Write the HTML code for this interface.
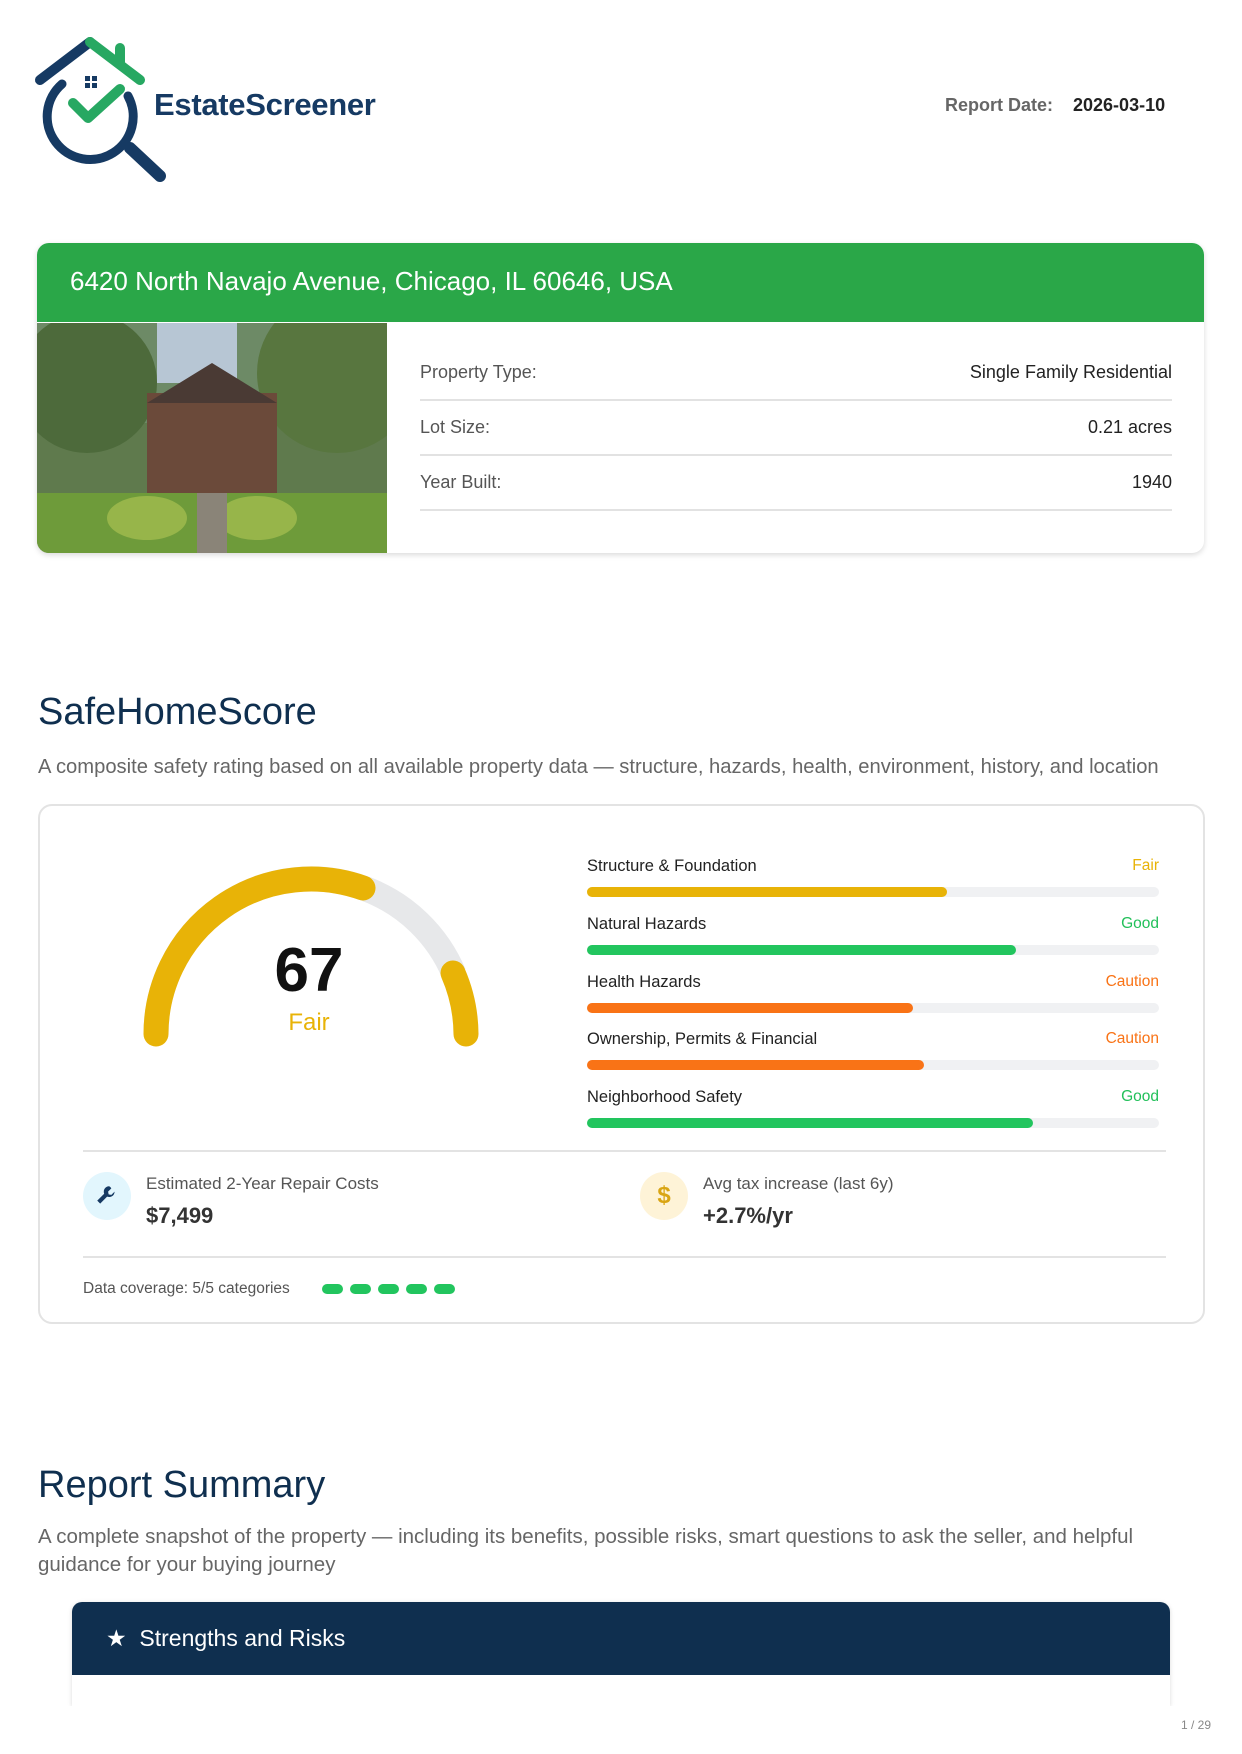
<!DOCTYPE html>
<html><head><meta charset="utf-8"><style>
*{margin:0;padding:0;box-sizing:border-box}
body{width:1242px;height:1754px;background:#fff;font-family:"Liberation Sans",sans-serif;position:relative;overflow:hidden;color:#222}
.a{position:absolute}
.row{position:absolute;left:420px;width:752px;height:55px;border-bottom:2px solid #e2e2e2;font-size:18px;color:#555;display:flex;justify-content:space-between;align-items:center}
.row b{font-weight:normal;color:#222}
.lbl{position:absolute;left:587px;width:572px;font-size:16.5px;color:#222;display:flex;justify-content:space-between}
.bar{position:absolute;left:587px;width:572px;height:10px;border-radius:5px;background:#f0f1f3}
.bar i{display:block;height:10px;border-radius:5px}
</style></head><body>
<svg class="a" style="left:0;top:0" width="200" height="190">
<path d="M40 80 L90 42" stroke="#163a63" stroke-width="10" stroke-linecap="round" fill="none"/>
<path d="M90 42 L140 80 M120 62 V48" stroke="#27a862" stroke-width="10" stroke-linecap="round" fill="none"/>
<path d="M62 84 A43 43 0 1 0 128 96" stroke="#163a63" stroke-width="9" stroke-linecap="round" fill="none"/>
<path d="M130 148 L160 176" stroke="#163a63" stroke-width="12" stroke-linecap="round"/>
<rect x="85" y="76" width="5" height="5" fill="#163a63"/><rect x="92" y="76" width="5" height="5" fill="#163a63"/>
<rect x="85" y="83" width="5" height="5" fill="#163a63"/><rect x="92" y="83" width="5" height="5" fill="#163a63"/>
<path d="M73 103 L88 118 L120 89" stroke="#27a862" stroke-width="10" stroke-linecap="round" stroke-linejoin="round" fill="none"/>
</svg>
<div class="a" style="left:154px;top:87px;font-size:31px;font-weight:bold;color:#163a63;letter-spacing:-0.3px">EstateScreener</div>
<div class="a" style="left:945px;top:95px;font-size:18px;font-weight:bold;color:#666">Report Date:<span style="color:#222;margin-left:20px">2026-03-10</span></div>

<div class="a" style="left:37px;top:243px;border-radius:12px;box-shadow:0 2px 6px rgba(0,0,0,.15);overflow:hidden;background:#fff;width:1167px;height:310px">
<div style="height:79px;background:#2aa748;color:#fff;font-size:26px;padding:23px 0 0 33px">6420 North Navajo Avenue, Chicago, IL 60646, USA</div>
<svg width="350" height="234" style="position:absolute;left:0;top:80px">
<rect width="350" height="234" fill="#5f7a4d"/><rect width="350" height="100" fill="#6d8a66"/>
<rect x="120" y="0" width="80" height="60" fill="#b7c6d4"/>
<circle cx="50" cy="60" r="70" fill="#4d6a3b"/><circle cx="300" cy="50" r="80" fill="#58763f"/>
<rect x="110" y="70" width="130" height="100" fill="#6b4a3a"/><polygon points="110,80 175,40 240,80" fill="#4a3a34"/>
<rect x="0" y="170" width="350" height="64" fill="#6e9b3a"/><ellipse cx="110" cy="195" rx="40" ry="22" fill="#97b54a"/><ellipse cx="220" cy="195" rx="40" ry="22" fill="#97b54a"/>
<rect x="160" y="170" width="30" height="64" fill="#8a8478"/>
</svg>
<div class="row" style="top:103px;left:383px">Property Type:<b>Single Family Residential</b></div>
<div class="row" style="top:158px;left:383px">Lot Size:<b>0.21 acres</b></div>
<div class="row" style="top:213px;left:383px">Year Built:<b>1940</b></div>
</div>

<div class="a" style="left:38px;top:691px;font-size:38px;color:#0f2f4f">SafeHomeScore</div>
<div class="a" style="left:38px;top:756px;font-size:20.2px;color:#666;white-space:nowrap">A composite safety rating based on all available property data — structure, hazards, health, environment, history, and location</div>

<div class="a" style="left:38px;top:804px;height:520px;border:2px solid #e3e3e3;border-radius:14px;width:1167px"></div>
<svg class="a" style="left:0;top:-7px" width="700" height="1100">
<path d="M156 1041 A155 155 0 0 1 366 896" stroke="#e7e8ea" stroke-width="25" fill="none"/>
<path d="M366 896 A155 155 0 0 1 454 981" stroke="#e7e8ea" stroke-width="25" fill="none"/>
<path d="M156 1041 A155 155 0 0 1 363 895" stroke="#e8b307" stroke-width="25" stroke-linecap="round" fill="none"/>
<path d="M453 980 A155 155 0 0 1 466 1041" stroke="#e8b307" stroke-width="25" stroke-linecap="round" fill="none"/>
</svg>
<div class="a" style="left:209px;top:940px;width:200px;text-align:center;font-size:62px;font-weight:bold;color:#111;line-height:1">67</div>
<div class="a" style="left:209px;top:1009px;width:200px;text-align:center;font-size:24px;color:#e8b307">Fair</div>

<div class="lbl" style="top:857px">Structure &amp; Foundation<span style="color:#e8b307;font-size:15.5px">Fair</span></div>
<div class="bar" style="top:887px"><i style="width:63%;background:#e8b307"></i></div>
<div class="lbl" style="top:915px">Natural Hazards<span style="color:#22c05a;font-size:15.5px">Good</span></div>
<div class="bar" style="top:945px"><i style="width:75%;background:#22c55e"></i></div>
<div class="lbl" style="top:973px">Health Hazards<span style="color:#f97316;font-size:15.5px">Caution</span></div>
<div class="bar" style="top:1003px"><i style="width:57%;background:#f97316"></i></div>
<div class="lbl" style="top:1030px">Ownership, Permits &amp; Financial<span style="color:#f97316;font-size:15.5px">Caution</span></div>
<div class="bar" style="top:1060px"><i style="width:59%;background:#f97316"></i></div>
<div class="lbl" style="top:1088px">Neighborhood Safety<span style="color:#22c05a;font-size:15.5px">Good</span></div>
<div class="bar" style="top:1118px"><i style="width:78%;background:#22c55e"></i></div>

<div class="a" style="left:83px;top:1150px;width:1083px;height:2px;background:#e3e3e3"></div>
<div class="a" style="left:83px;top:1172px;width:48px;height:48px;border-radius:50%;background:#e2f6fd;text-align:center">
<svg width="26" height="26" viewBox="0 0 24 24" style="margin-top:11px"><path d="M14 3a5 5 0 0 0-4.6 6.9L3 16.3 5.7 19l6.4-6.4A5 5 0 0 0 19 8l-3 3-2.5-.5L13 8l3-3a5 5 0 0 0-2-2z" fill="#163a63"/></svg></div>
<div class="a" style="left:146px;top:1174px;font-size:17px;color:#555">Estimated 2-Year Repair Costs</div>
<div class="a" style="left:146px;top:1203px;font-size:22px;font-weight:bold;color:#333">$7,499</div>
<div class="a" style="left:640px;top:1172px;width:48px;height:48px;border-radius:50%;background:#fef3d7;color:#d9a514;font-size:24px;font-weight:bold;text-align:center;line-height:48px">$</div>
<div class="a" style="left:703px;top:1174px;font-size:17px;color:#555">Avg tax increase (last 6y)</div>
<div class="a" style="left:703px;top:1203px;font-size:22px;font-weight:bold;color:#333">+2.7%/yr</div>
<div class="a" style="left:83px;top:1256px;width:1083px;height:2px;background:#e3e3e3"></div>
<div class="a" style="left:83px;top:1280px;font-size:15.5px;color:#555">Data coverage: 5/5 categories</div>
<div class="a" style="left:322px;top:1284px;display:flex;gap:7px"><i style="width:21px;height:10px;border-radius:5px;background:#22c55e"></i><i style="width:21px;height:10px;border-radius:5px;background:#22c55e"></i><i style="width:21px;height:10px;border-radius:5px;background:#22c55e"></i><i style="width:21px;height:10px;border-radius:5px;background:#22c55e"></i><i style="width:21px;height:10px;border-radius:5px;background:#22c55e"></i></div>

<div class="a" style="left:38px;top:1464px;font-size:38px;color:#0f2f4f">Report Summary</div>
<div class="a" style="left:38px;top:1523px;width:1130px;font-size:20.5px;color:#666;line-height:28px">A complete snapshot of the property — including its benefits, possible risks, smart questions to ask the seller, and helpful guidance for your buying journey</div>
<div class="a" style="left:72px;top:1602px;height:104px;box-shadow:0 1px 5px rgba(0,0,0,.15);border-radius:10px 10px 0 0;width:1098px"></div>
<div class="a" style="left:72px;top:1602px;width:1098px;height:73px;background:#0f2f4f;border-radius:10px 10px 0 0;color:#fff;font-size:23px;padding:23px 0 0 34px">★&nbsp; Strengths and Risks</div>
<div class="a" style="left:0;top:1706px;width:1242px;height:48px;background:#fff"></div>
<div class="a" style="left:1181px;top:1718px;font-size:12px;color:#888">1 / 29</div>
</body></html>
